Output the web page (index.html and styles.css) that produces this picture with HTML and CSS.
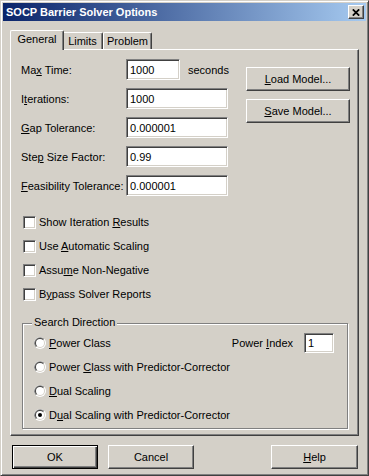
FILE: index.html
```html
<!DOCTYPE html>
<html>
<head>
<meta charset="utf-8">
<link rel="stylesheet" href="styles.css">
</head>
<body>
<div class="window">
  <div class="titlebar">
    <span class="title">SOCP Barrier Solver Options</span>
    <div class="close"><svg width="8" height="7" viewBox="0 0 8 7"><path d="M0.8 0.3 L7.2 6.7 M7.2 0.3 L0.8 6.7" stroke="#000" stroke-width="1.7"/></svg></div>
  </div>
  <div class="client">
    <div class="tabs">
      <div class="tab sel">General</div>
      <div class="tab limits">Limits</div>
      <div class="tab problem">Problem</div>
    </div>
    <div class="panel">
      <div class="top">
        <div class="fields">
          <div class="label">Ma<u>x</u> Time:</div>
          <div class="with-unit"><div class="edit short">1000</div><span class="unit">seconds</span></div>
          <div class="label">I<u>t</u>erations:</div>
          <div class="edit">1000</div>
          <div class="label"><u>G</u>ap Tolerance:</div>
          <div class="edit">0.000001</div>
          <div class="label">Ste<u>p</u> Size Factor:</div>
          <div class="edit">0.99</div>
          <div class="label"><u>F</u>easibility Tolerance:</div>
          <div class="edit">0.000001</div>
        </div>
        <div class="side">
          <div class="btn side-btn"><span><u>L</u>oad Model...</span></div>
          <div class="btn side-btn"><span><u>S</u>ave Model...</span></div>
        </div>
      </div>
      <div class="checks">
        <div class="check"><span class="box"></span><span>Show Iteration <u>R</u>esults</span></div>
        <div class="check"><span class="box"></span><span>Use <u>A</u>utomatic Scaling</span></div>
        <div class="check"><span class="box"></span><span>Assu<u>m</u>e Non-Negative</span></div>
        <div class="check"><span class="box"></span><span>B<u>y</u>pass Solver Reports</span></div>
      </div>
      <div class="group">
        <div class="group-label">Search Direction</div>
        <div class="radios">
          <div class="radio-row">
            <svg class="radio" width="12" height="12" viewBox="0 0 12 12"><circle cx="6" cy="6" r="6" fill="#fff"/><path d="M1.76 10.24 A6 6 0 0 1 10.24 1.76 Z" fill="#808080"/><circle cx="6" cy="6" r="5" fill="#d4d0c8"/><path d="M2.46 9.54 A5 5 0 0 1 9.54 2.46 Z" fill="#404040"/><circle cx="6" cy="6" r="4" fill="#fff"/></svg>
            <span><u>P</u>ower Class</span>
            <div class="power">
              <span>Power <u>I</u>ndex</span>
              <div class="edit tiny">1</div>
            </div>
          </div>
          <div class="radio-row">
            <svg class="radio" width="12" height="12" viewBox="0 0 12 12"><circle cx="6" cy="6" r="6" fill="#fff"/><path d="M1.76 10.24 A6 6 0 0 1 10.24 1.76 Z" fill="#808080"/><circle cx="6" cy="6" r="5" fill="#d4d0c8"/><path d="M2.46 9.54 A5 5 0 0 1 9.54 2.46 Z" fill="#404040"/><circle cx="6" cy="6" r="4" fill="#fff"/></svg>
            <span>Power <u>C</u>lass with Predictor-Corrector</span>
          </div>
          <div class="radio-row">
            <svg class="radio" width="12" height="12" viewBox="0 0 12 12"><circle cx="6" cy="6" r="6" fill="#fff"/><path d="M1.76 10.24 A6 6 0 0 1 10.24 1.76 Z" fill="#808080"/><circle cx="6" cy="6" r="5" fill="#d4d0c8"/><path d="M2.46 9.54 A5 5 0 0 1 9.54 2.46 Z" fill="#404040"/><circle cx="6" cy="6" r="4" fill="#fff"/></svg>
            <span><u>D</u>ual Scaling</span>
          </div>
          <div class="radio-row">
            <svg class="radio" width="12" height="12" viewBox="0 0 12 12"><circle cx="6" cy="6" r="6" fill="#fff"/><path d="M1.76 10.24 A6 6 0 0 1 10.24 1.76 Z" fill="#808080"/><circle cx="6" cy="6" r="5" fill="#d4d0c8"/><path d="M2.46 9.54 A5 5 0 0 1 9.54 2.46 Z" fill="#404040"/><circle cx="6" cy="6" r="4" fill="#fff"/><circle cx="6" cy="6" r="2" fill="#000"/></svg>
            <span>D<u>u</u>al Scaling with Predictor-Corrector</span>
          </div>
        </div>
      </div>
    </div>
    <div class="footer">
      <div class="btn default">OK</div>
      <div class="btn">Cancel</div>
      <div class="btn help"><span><u>H</u>elp</span></div>
    </div>
  </div>
</div>
</body>
</html>
```

FILE: styles.css
```css
* { box-sizing: border-box; }
html, body { margin: 0; padding: 0; }
body {
  width: 369px;
  height: 476px;
  overflow: hidden;
  background: #d4d0c8;
  font-family: "Liberation Sans", Arial, sans-serif;
  font-size: 11px;
  color: #000;
}
u { text-decoration: underline; text-underline-offset: 1px; }

.window {
  width: 369px;
  height: 476px;
  border: 1px solid;
  border-color: #d4d0c8 #404040 #404040 #d4d0c8;
  box-shadow: inset 1px 1px 0 #fff, inset -1px -1px 0 #808080;
  padding: 2px;
  display: flex;
  flex-direction: column;
}

.titlebar {
  flex: none;
  height: 18px;
  background: linear-gradient(to right, #0a246a, #a6caf0);
  display: flex;
  align-items: center;
  justify-content: space-between;
  padding: 0 2px 0 3px;
}
.title {
  color: #fff;
  font-weight: bold;
  font-size: 11px;
}
.close {
  width: 16px;
  height: 14px;
  background: #d4d0c8;
  border: 1px solid;
  border-color: #fff #404040 #404040 #fff;
  box-shadow: inset -1px -1px 0 #808080;
  display: flex;
  align-items: center;
  justify-content: center;
  padding-right: 1px;
}

.client {
  flex: 1;
  display: flex;
  flex-direction: column;
  padding: 9px 7px 4px 7px;
}

.tabs {
  display: flex;
  align-items: flex-end;
  height: 20px;
  margin-bottom: -1px;
  padding-left: 2px;
  position: relative;
  z-index: 1;
}
.tab {
  height: 17px;
  margin-bottom: 1px;
  border: 1px solid;
  border-bottom: none;
  border-color: #fff #404040 #404040 #fff;
  box-shadow: inset -1px 0 0 #808080;
  border-radius: 2px 2px 0 0;
  background: #d4d0c8;
  text-align: center;
  padding-top: 2px;
  line-height: 13px;
}
.tab.sel {
  height: 20px;
  margin: 0 -2px 0 -2px;
  width: 54px;
  padding-top: 2px;
  position: relative;
  z-index: 2;
}
.tab.limits { width: 41px; }
.tab.problem { width: 49px; }

.panel {
  flex: 1;
  border: 1px solid;
  border-color: #fff #404040 #404040 #fff;
  box-shadow: inset -1px -1px 0 #808080;
  padding: 9px 8px 0 10px;
  display: flex;
  flex-direction: column;
}

.top {
  display: flex;
  justify-content: space-between;
}
.fields {
  display: grid;
  grid-template-columns: 105px auto;
  row-gap: 8px;
  align-items: center;
}
.with-unit {
  display: flex;
  align-items: center;
  gap: 8px;
}
.edit {
  height: 21px;
  width: 102px;
  background: #fff;
  border: 1px solid;
  border-color: #808080 #fff #fff #808080;
  box-shadow: inset 1px 1px 0 #404040, inset -1px -1px 0 #d4d0c8;
  padding: 0 2px 0 3px;
  display: flex;
  align-items: center;
}
.edit.short { width: 54px; }
.edit.tiny { width: 30px; height: 20px; }

.side {
  display: flex;
  flex-direction: column;
  gap: 8px;
  margin-top: 8px;
}
.btn {
  height: 24px;
  width: 86px;
  background: #d4d0c8;
  border: 1px solid;
  border-color: #fff #404040 #404040 #fff;
  box-shadow: inset -1px -1px 0 #808080;
  display: flex;
  align-items: center;
  justify-content: center;
}
.btn.side-btn { width: 104px; }
.btn.default {
  border-color: #000;
  box-shadow: inset 1px 1px 0 #fff, inset -1px -1px 0 #404040, inset -2px -2px 0 #808080;
}

.checks {
  margin-top: 14px;
  padding-left: 2px;
  display: flex;
  flex-direction: column;
}
.check {
  height: 24px;
  display: flex;
  align-items: center;
  gap: 3px;
}
.box {
  width: 13px;
  height: 13px;
  flex: none;
  background: #fff;
  border: 1px solid;
  border-color: #808080 #fff #fff #808080;
  box-shadow: inset 1px 1px 0 #404040, inset -1px -1px 0 #d4d0c8;
}

.group {
  margin: 17px 2px 0 1px;
  border: 1px solid #808080;
  box-shadow: 1px 1px 0 #fff, inset 1px 1px 0 #fff;
  padding: 0 13px 1px 11px;
  display: flex;
  flex-direction: column;
}
.group-label {
  align-self: flex-start;
  margin-top: -8px;
  margin-left: -2px;
  padding: 0 2px;
  line-height: 13px;
  background: #d4d0c8;
}
.radios {
  padding-top: 2px;
  display: flex;
  flex-direction: column;
}
.radio-row {
  height: 24px;
  display: flex;
  align-items: center;
  gap: 3px;
}
.radio { flex: none; }
.power {
  margin-left: auto;
  display: flex;
  align-items: center;
  gap: 11px;
}

.footer {
  flex: none;
  margin-top: 9px;
  padding: 0 1px 0 2px;
  display: flex;
  gap: 10px;
}
.btn.help { margin-left: auto; width: 87px; }
```
